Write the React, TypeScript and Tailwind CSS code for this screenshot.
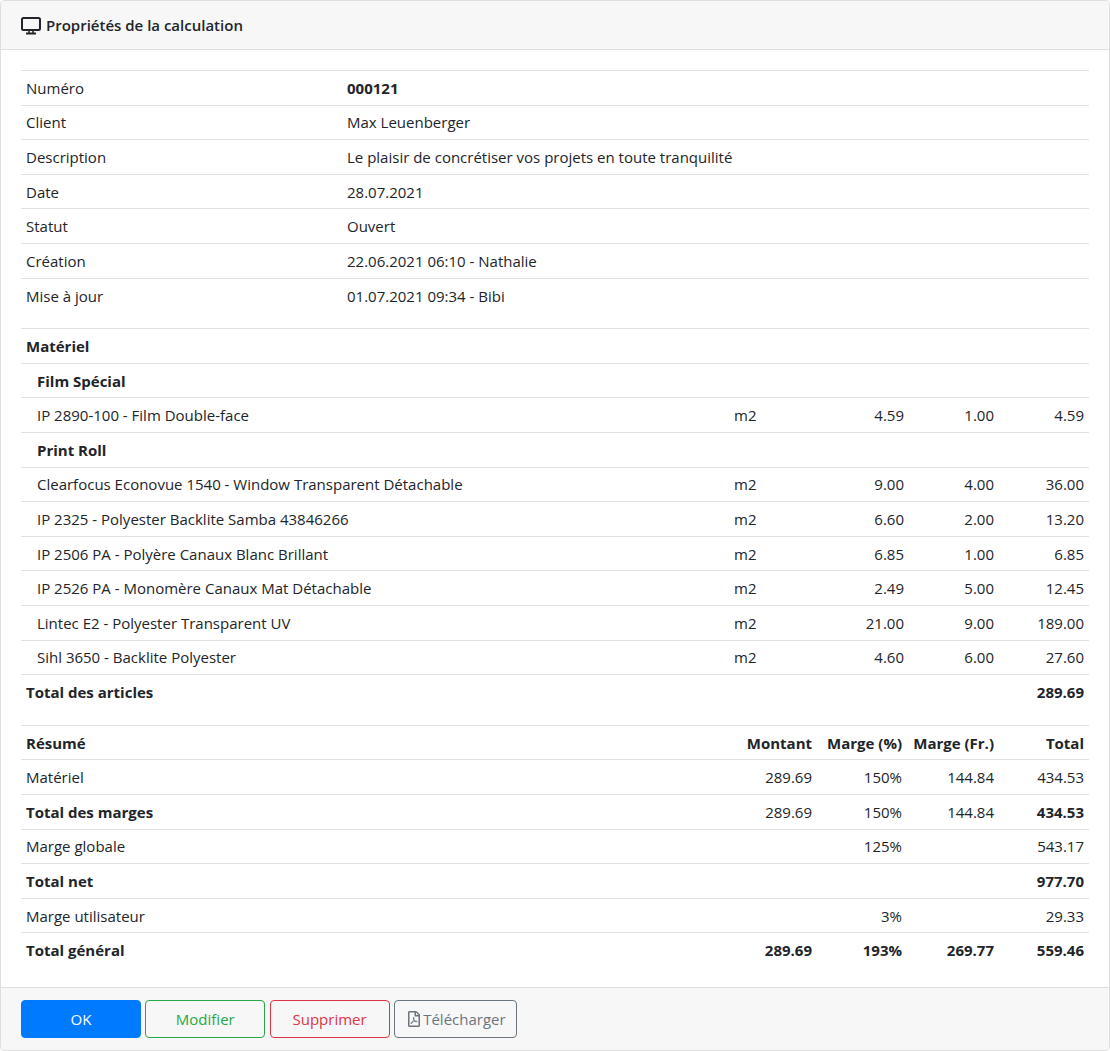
import { FaRegFilePdf } from 'react-icons/fa'

type Row = { label: string; unit?: string; a?: string; b?: string; c?: string; bold?: boolean; indent?: boolean }

const infos = [
  ['Numéro', '000121'],
  ['Client', 'Max Leuenberger'],
  ['Description', 'Le plaisir de concrétiser vos projets en toute tranquilité'],
  ['Date', '28.07.2021'],
  ['Statut', 'Ouvert'],
  ['Création', '22.06.2021 06:10 - Nathalie'],
  ['Mise à jour', '01.07.2021 09:34 - Bibi'],
]

const articles: Row[] = [
  { label: 'Matériel', bold: true },
  { label: 'Film Spécial', bold: true, indent: true },
  { label: 'IP 2890-100 - Film Double-face', indent: true, unit: 'm2', a: '4.59', b: '1.00', c: '4.59' },
  { label: 'Print Roll', bold: true, indent: true },
  { label: 'Clearfocus Econovue 1540 - Window Transparent Détachable', indent: true, unit: 'm2', a: '9.00', b: '4.00', c: '36.00' },
  { label: 'IP 2325 - Polyester Backlite Samba 43846266', indent: true, unit: 'm2', a: '6.60', b: '2.00', c: '13.20' },
  { label: 'IP 2506 PA - Polyère Canaux Blanc Brillant', indent: true, unit: 'm2', a: '6.85', b: '1.00', c: '6.85' },
  { label: 'IP 2526 PA - Monomère Canaux Mat Détachable', indent: true, unit: 'm2', a: '2.49', b: '5.00', c: '12.45' },
  { label: 'Lintec E2 - Polyester Transparent UV', indent: true, unit: 'm2', a: '21.00', b: '9.00', c: '189.00' },
  { label: 'Sihl 3650 - Backlite Polyester', indent: true, unit: 'm2', a: '4.60', b: '6.00', c: '27.60' },
  { label: 'Total des articles', bold: true, c: '289.69' },
]

const cell = 'h-[34.6px] border-t border-[#dee2e6] px-[5px] pt-px pb-0 align-middle leading-[21px]'

function DesktopIcon() {
  return (
    <svg width="20" height="18" viewBox="0 0 20 18" fill="none" stroke="currentColor" className="shrink-0">
      <rect x="1" y="1" width="18" height="12" rx="1.5" strokeWidth="2" />
      <path d="M8 14v2M12 14v2" strokeWidth="1.5" />
      <path d="M5 16.5h10" strokeWidth="2" />
    </svg>
  )
}

export default function App() {
  return (
    <div className="font-['Open_Sans',sans-serif] text-[15px] text-[#212529] bg-white">
      <div className="h-[1051px] flex flex-col border border-[#dfdfdf] rounded-[4px] overflow-hidden">
        {/* Header */}
        <div className="h-[49px] flex items-center gap-[5px] px-5 pt-px bg-[#f7f7f7] border-b border-[#dfdfdf] font-semibold">
          <DesktopIcon />
          <span>Propriétés de la calculation</span>
        </div>

        {/* Body */}
        <div className="flex-1 px-5 pt-5">
          <table className="w-full mb-[15.6px] border-collapse table-fixed">
            <colgroup>
              <col className="w-[321px]" />
              <col />
            </colgroup>
            <tbody>
              {infos.map(([k, v], i) => (
                <tr key={k}>
                  <td className={cell}>{k}</td>
                  <td className={cell + (i === 0 ? ' font-bold' : '')}>{v}</td>
                </tr>
              ))}
            </tbody>
          </table>

          <table className="w-full mb-[15.6px] border-collapse table-fixed">
            <colgroup>
              <col />
              <col className="w-[90px]" />
              <col className="w-[90px]" />
              <col className="w-[90px]" />
              <col className="w-[90px]" />
            </colgroup>
            <tbody>
              {articles.map((r) => (
                <tr key={r.label} className={r.bold ? 'font-bold' : ''}>
                  <td className={cell + (r.indent ? ' pl-4' : '')}>{r.label}</td>
                  <td className={cell}>{r.unit}</td>
                  <td className={cell + ' text-right'}>{r.a}</td>
                  <td className={cell + ' text-right'}>{r.b}</td>
                  <td className={cell + ' text-right'}>{r.c}</td>
                </tr>
              ))}
            </tbody>
          </table>

          <table className="w-full border-collapse table-fixed">
            <colgroup>
              <col />
              <col className="w-[90px]" />
              <col className="w-[90px]" />
              <col className="w-[92px]" />
              <col className="w-[90px]" />
            </colgroup>
            <tbody>
              <tr className="font-bold">
                <td className={cell}>Résumé</td>
                <td className={cell + ' text-right'}>Montant</td>
                <td className={cell + ' text-right'}>Marge (%)</td>
                <td className={cell + ' text-right'}>Marge (Fr.)</td>
                <td className={cell + ' text-right'}>Total</td>
              </tr>
              <tr>
                <td className={cell}>Matériel</td>
                <td className={cell + ' text-right'}>289.69</td>
                <td className={cell + ' text-right'}>150%</td>
                <td className={cell + ' text-right'}>144.84</td>
                <td className={cell + ' text-right'}>434.53</td>
              </tr>
              <tr>
                <td className={cell + ' font-bold'}>Total des marges</td>
                <td className={cell + ' text-right'}>289.69</td>
                <td className={cell + ' text-right'}>150%</td>
                <td className={cell + ' text-right'}>144.84</td>
                <td className={cell + ' text-right font-bold'}>434.53</td>
              </tr>
              <tr>
                <td className={cell}>Marge globale</td>
                <td className={cell}></td>
                <td className={cell + ' text-right'}>125%</td>
                <td className={cell}></td>
                <td className={cell + ' text-right'}>543.17</td>
              </tr>
              <tr className="font-bold">
                <td className={cell}>Total net</td>
                <td className={cell}></td>
                <td className={cell}></td>
                <td className={cell}></td>
                <td className={cell + ' text-right'}>977.70</td>
              </tr>
              <tr>
                <td className={cell}>Marge utilisateur</td>
                <td className={cell}></td>
                <td className={cell + ' text-right'}>3%</td>
                <td className={cell}></td>
                <td className={cell + ' text-right'}>29.33</td>
              </tr>
              <tr className="font-bold">
                <td className={cell}>Total général</td>
                <td className={cell + ' text-right'}>289.69</td>
                <td className={cell + ' text-right'}>193%</td>
                <td className={cell + ' text-right'}>269.77</td>
                <td className={cell + ' text-right'}>559.46</td>
              </tr>
            </tbody>
          </table>
        </div>

        {/* Footer */}
        <div className="h-[63px] flex items-center gap-[4.3px] px-5 bg-[#f7f7f7] border-t border-[#dfdfdf]">
          <button className="w-[120px] h-[38px] rounded-[4px] bg-[#007bff] border border-[#007bff] text-white">OK</button>
          <button className="w-[120px] h-[38px] rounded-[4px] border border-[#28a745] text-[#28a745]">Modifier</button>
          <button className="w-[120px] h-[38px] rounded-[4px] border border-[#dc3545] text-[#dc3545]">Supprimer</button>
          <button className="w-[123px] h-[38px] pl-[3px] rounded-[4px] border border-[#6c757d] text-[#6c757d] flex items-center justify-center gap-[3px]">
            <FaRegFilePdf className="w-3 h-4" />
            Télécharger
          </button>
        </div>
      </div>
    </div>
  )
}
